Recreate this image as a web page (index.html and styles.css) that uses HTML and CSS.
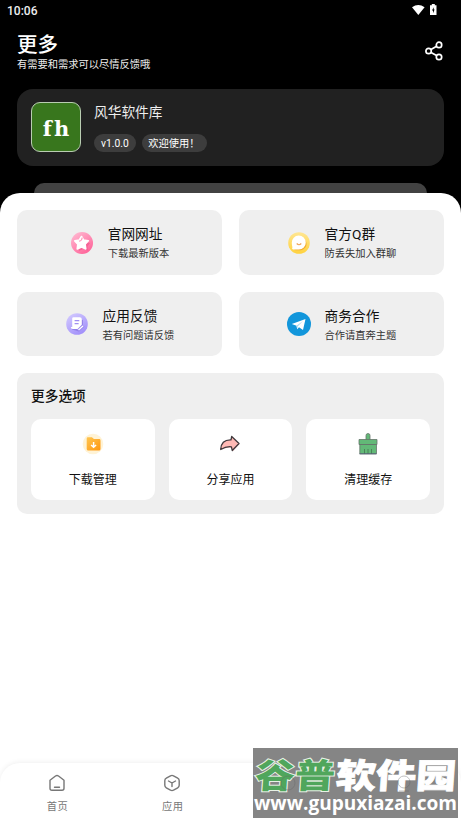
FILE: index.html
```html
<!DOCTYPE html>
<html lang="zh-CN">
<head>
<meta charset="utf-8">
<title>更多</title>
<link rel="stylesheet" href="styles.css">
</head>
<body>
<header class="hero">
  <div class="status">
    <span>10:06</span>
    <svg width="26" height="12" viewBox="0 0 26 12" fill="#fff"><path d="M0 3.200Q6.300-1.200 12.600 3.200L6.300 11Z"/><path d="M18 1.200H19.800V0h3v1.200h1.700V11H18z"/><path d="M21.700 3.200l-1.700 3.300h1v2.700l1.600-3.600h-.9z" fill="#000"/></svg>
  </div>
  <div class="heading">
    <div><h1>更多</h1><p>有需要和需求可以尽情反馈哦</p></div>
    <svg class="share" width="18" height="20" viewBox="0 0 18 20" fill="none" stroke="#fff" stroke-width="1.700"><circle cx="3.600" cy="10" r="2.700"/><circle cx="14" cy="3.900" r="2.700"/><circle cx="14" cy="16" r="2.700"/><path d="M6 8.600l5.600-3.300M6 11.400l5.600 3.200"/></svg>
  </div>
  <section class="app-card">
    <div class="logo">fh</div>
    <div><h2>风华软件库</h2><div class="tags"><span>v1.0.0</span><span class="welcome">欢迎使用！</span></div></div>
  </section>
  <div class="peek"></div>
</header>
<main class="sheet">
  <div class="links">
    <a class="link">
      <svg width="24" height="24" viewBox="0 0 24 24"><defs><linearGradient id="pink" x2=".7" y2="1"><stop stop-color="#ffc0d6"/><stop offset="1" stop-color="#ff659a"/></linearGradient></defs><circle cx="12" cy="12" r="11" fill="url(#pink)"/><path d="M13 8l2.800 3.200 4.200.8-2.500 3.500.3 4-4.600-1.500-4.300 1.900.1-4.700-2-3.600 4-1z" fill="#ed4f86" opacity=".55"/><path d="M11.500 5.500l2.200 3.600 4.600.7-3.200 3.500.7 4.600-4.300-1.900-4.300 2 .6-4.700-3-3.400 4.400-.8z" fill="#fff" stroke="#fff" stroke-width="1.600" stroke-linejoin="round"/><path d="M12.200 6.500q0 3-3.200 3.800" fill="none" stroke="#ff9abc" stroke-width="1.100"/></svg>
      <div><h3>官网网址</h3><p>下载最新版本</p></div>
    </a>
    <a class="link">
      <svg width="24" height="24" viewBox="0 0 24 24"><defs><linearGradient id="gold" x2="0" y2="1"><stop stop-color="#ffe692"/><stop offset="1" stop-color="#ffd23d"/></linearGradient></defs><circle cx="12" cy="12" r="10.800" fill="url(#gold)"/><path d="M17 7.500c4 4 3 9-1 11-3 1.400-6 .7-9 .5z" fill="#ee9d25" opacity=".75"/><path d="M5 18c1-1.500-.2-3-.2-6.300a7 7 0 1 1 7 6.800c-3 0-5 .3-6.800-.5z" fill="#fff"/><path d="M9.700 12.500q2.300 2.500 4.600 0" fill="none" stroke="#efa45a" stroke-width="1.200"/></svg>
      <div><h3>官方Q群</h3><p>防丢失加入群聊</p></div>
    </a>
    <a class="link">
      <svg width="24" height="24" viewBox="0 0 24 24"><defs><linearGradient id="violet" x2=".6" y2="1"><stop stop-color="#d6ceff"/><stop offset="1" stop-color="#a391fa"/></linearGradient></defs><circle cx="12" cy="12" r="10.800" fill="url(#violet)"/><path d="M9 7l9 1v6l1.500.5-5.500 5-7-2z" fill="#765fd7" opacity=".5"/><path d="M8.500 5.300h6.300q2 0 2 2v5.400L12.500 17H7.800q-2 0-2-2h1.400V6.600q0-1.300 1.300-1.300z" fill="#fff"/><path d="M9.600 8.700h4.700M9.600 11.600h4" stroke="#a18ef2" stroke-width="1.300"/><path d="M12.500 17.800l5-4.500 1.200 1.300-4.500 3.900z" fill="#fff" stroke="#9f8df0" stroke-width=".5"/></svg>
      <div><h3>应用反馈</h3><p>若有问题请反馈</p></div>
    </a>
    <a class="link">
      <svg width="24" height="24" viewBox="0 0 24 24"><circle cx="12" cy="12" r="12" fill="#1296db"/><path d="M4.800 12L18.500 7 16 18l-4-2.800-1.800 2-.7-3.400z" fill="#fff"/><path d="M9.400 13.800L16 9l-5.300 5.500-.4 2.500" fill="#a9d9f3"/></svg>
      <div><h3>商务合作</h3><p>合作请直奔主题</p></div>
    </a>
  </div>
  <section class="more">
    <h2>更多选项</h2>
    <div class="tiles">
      <a class="tile"><svg width="24" height="24" viewBox="0 0 24 24"><defs><linearGradient id="folder" x2="1" y2="1"><stop stop-color="#ffc54f"/><stop offset="1" stop-color="#ff9710"/></linearGradient></defs><circle cx="12" cy="12" r="10.300" fill="#fff3d6"/><path d="M5.700 6.500q0-1.200 1.200-1.200h4l2 1.700h5.200q1.400 0 1.400 1.400v8.500q0 1.600-1.500 1.600H7.300q-1.600 0-1.600-1.500z" fill="url(#folder)"/><path d="M12.600 10v5.300M10.100 13l2.500 2.300 2.500-2.300" fill="none" stroke="#fff" stroke-width="1.500"/></svg><span>下载管理</span></a>
      <a class="tile"><svg width="24" height="24" viewBox="0 0 24 24"><path d="M5 18.500C8 15 10 16 14 16l1 3 6.500-7-6-5" fill="#ffc0bd"/><path d="M2.700 17.500C3 11 7 7.700 13 7.900L13.700 4.500 21 11.500l-6.700 7-.9-3.700C8.500 14.300 6 15.500 2.700 17.500z" fill="#ffb9b5" stroke="#40383c" stroke-width="1.300" stroke-linejoin="round"/></svg><span>分享应用</span></a>
      <a class="tile"><svg width="24" height="24" viewBox="0 0 24 24"><g fill="#62b977" stroke="#66756b" stroke-width=".8"><path d="M10 8V3.500q0-2 2-2t2 2V8"/><path d="M3 7.500h18v5H3zM3.800 12.500h16.700v9.300H3.800z"/></g><path d="M8.500 22v-5M12 22v-5M15.500 22v-5" stroke="#477f55" stroke-width=".9"/><path d="M3.500 21.800h17" stroke="#567"/></svg><span>清理缓存</span></a>
    </div>
  </section>
</main>
<nav class="nav">
  <a><svg width="18" height="18" viewBox="0 0 18 18"><path d="M2 6.300L7.500 2q1.500-1 3 0L16 6.300v8q0 2-2 2H4q-2 0-2-2zM6.500 13.200h5"/></svg>首页</a>
  <a><svg width="18" height="18" viewBox="0 0 18 18"><path d="M7.500 1.800q1.500-.8 3 0l4.200 2.400q1.500.8 1.500 2.500v4.600q0 1.700-1.500 2.500l-4.200 2.400q-1.500.8-3 0l-4.200-2.400q-1.500-.8-1.500-2.500V6.700q0-1.700 1.500-2.500zM5.500 7L9 9l3.500-2M9 9v3.600"/></svg>应用</a>
  <a></a><a></a>
</nav>
<aside class="watermark">
  <svg width="205" height="70" viewBox="0 0 205 70">
    <text class="cn green" x="4" y="40" textLength="80" lengthAdjust="spacingAndGlyphs">谷普</text>
    <text class="cn" x="85" y="40" textLength="120" lengthAdjust="spacingAndGlyphs">软件园</text>
    <text class="url" x="1" y="62" textLength="203" lengthAdjust="spacingAndGlyphs">www.gupuxiazai.com</text>
    <g class="ghost"><circle cx="35" cy="35" r="7"/><circle cx="151" cy="34" r="6"/><path d="M146 43h10"/></g>
  </svg>
</aside>
</body>
</html>
```
FILE: styles.css
```css
* { box-sizing: border-box; }
body, h1, h2, h3, p { margin: 0; font-weight: 400; }
body {
  height: 821px;
  display: flex;
  flex-direction: column;
  position: relative;
  overflow: hidden;
  background: #fff;
  color: #111;
  font-family: Roboto, "Noto Sans CJK SC", sans-serif;
}
svg { display: block; flex: none; }
.hero { height: 213px; flex: none; padding: 0 17px; background: #000; color: #fff; }
.status { height: 20px; margin: 0 6px 0 -10px; padding-top: 4px; display: flex; justify-content: space-between; font-size: 12px; line-height: 14px; font-weight: 500; color: #eee; }
.heading { height: 69px; padding-top: 13px; display: flex; justify-content: space-between; }
.heading h1 { font-size: 20.500px; line-height: 24px; font-weight: 500; }
.heading p { font-size: 10.250px; line-height: 15px; color: #eee; }
.share { margin-top: 8px; margin-right: 1px; }
.app-card { height: 77px; padding: 13px 14px; display: flex; gap: 13px; background: #212121; border-radius: 16px; }
.logo { width: 50px; height: 50px; border: 1px solid #b9cdb2; border-radius: 9px; background: #38761d; text-align: center; font: bold 21px/51px "DejaVu Serif", serif; letter-spacing: 2px; text-indent: 2px; }
.app-card h2 { font-size: 13.700px; line-height: 20px; color: #eee; }
.tags { display: flex; gap: 6.500px; margin-top: 12px; }
.tags span { height: 18px; padding: 0 7px; border-radius: 9px; background: #3d3d3d; font-size: 10.250px; line-height: 19px; }
.tags .welcome { width: 65px; padding: 0 6px; white-space: nowrap; }
.peek { height: 30px; margin: 17px 17px 0; border-radius: 10px 10px 0 0; background: #424242; }
.sheet { flex: 1; z-index: 1; margin-top: -20px; padding: 17px; background: #fff; border-radius: 20px 20px 0 0; }
.links { display: grid; grid-template-columns: 1fr 1fr; gap: 17px; }
.link { height: 64.500px; display: flex; align-items: center; justify-content: center; gap: 14px; background: #efefef; border-radius: 10px; }
.link > div { padding-top: 2px; }
.link > svg { margin-top: 1px; }
.link h3 { font-size: 13.700px; line-height: 20px; }
.link p { font-size: 10.250px; line-height: 16px; margin-top: 2px; color: #333; }
.more { height: 141px; margin-top: 17px; padding: 13px 14px; background: #efefef; border-radius: 10px; }
.more h2 { font-size: 13.700px; line-height: 20px; font-weight: 500; }
.tiles { display: grid; grid-template-columns: repeat(3, 1fr); gap: 14px; margin-top: 13px; }
.tile { height: 81px; padding-top: 13px; display: flex; flex-direction: column; align-items: center; background: #fff; border-radius: 10px; font-size: 12px; line-height: 18px; }
.tile span { margin-top: 15px; }
.nav { height: 58px; flex: none; z-index: 2; display: grid; grid-template-columns: repeat(4, 1fr); background: #fff; border-radius: 20px 20px 0 0; box-shadow: 0 -1px 5px #00000010; }
.nav a { display: flex; flex-direction: column; align-items: center; padding-top: 11px; font-size: 10.250px; line-height: 16px; letter-spacing: .5px; gap: 7px; color: #777; }
.nav svg { margin-right: 1px; fill: none; stroke: #777; stroke-width: 1.400; stroke-linecap: round; stroke-linejoin: round; }
.watermark { position: absolute; z-index: 3; left: 253px; top: 748px; width: 205px; height: 70px; background: #858585; }
.cn { font: 900 34px "Noto Sans CJK SC", sans-serif; fill: #fff; stroke: #fff; stroke-width: .8px; transform: skewX(-4deg); }
.green { fill: #50a65c; stroke: #e8f2e6; stroke-width: 2px; paint-order: stroke; }
.url { font: bold 20px "Open Sans", sans-serif; fill: #fff; }
.ghost { fill: none; stroke: #666; opacity: .4; }
```
